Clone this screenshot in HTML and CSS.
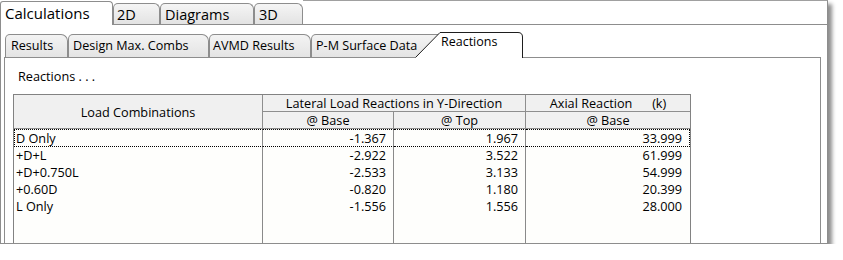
FILE: index.html
```html
<!DOCTYPE html>
<html lang="en">
<head>
	<meta charset="UTF-8">
	<title>Reactions</title>
	<link rel="stylesheet" href="styles.css">
</head>
<body>
	<div class="frame">
		<!-- main tabs -->
		<div class="main-tabs">
			<div class="mtab mtab-calc active">Calculations</div>
			<div class="mtab mtab-2d">2D</div>
			<div class="mtab mtab-diag">Diagrams</div>
			<div class="mtab mtab-3d">3D</div>
			<div class="mtab-fill"></div>
		</div>
		<div class="main-panel">
			<!-- sub tabs -->
			<div class="sub-tabs">
				<div class="stab stab-res">Results</div>
				<div class="stab stab-dmc">Design Max. Combs</div>
				<div class="stab stab-avmd">AVMD Results</div>
				<div class="stab stab-pm">P-M Surface Data</div>
				<div class="stab-active">
					<svg class="stab-shape" width="108" height="26" viewBox="0 0 108 26">
						<path d="M0,26 L25,0.5 H103 Q107.5,0.5 107.5,5 V26 Z" fill="#fff"/>
						<path d="M0.5,25.5 L25,0.5 H103 Q107.5,0.5 107.5,5 V26" fill="none" stroke="#1e1e1e"/>
					</svg>
					<span class="stab-label">Reactions</span>
				</div>
				<div class="stab-fill"></div>
			</div>
			<div class="sub-panel">
				<div class="caption">Reactions . . .</div>
				<div class="grid">
					<div class="hd hd-load">Load Combinations</div>
					<div class="hd hd-lat">Lateral Load Reactions in Y-Direction</div>
					<div class="hd hd-axial">Axial Reaction&nbsp;&nbsp;&nbsp;&nbsp;&nbsp;&nbsp;(k)</div>
					<div class="hd hd-sub">@ Base</div>
					<div class="hd hd-sub">@ Top</div>
					<div class="hd hd-sub hd-last">@ Base</div>

					<div class="cell name focus">D Only</div>
					<div class="cell num focus">-1.367</div>
					<div class="cell num focus">1.967</div>
					<div class="cell num last focus">33.999</div>

					<div class="cell name">+D+L</div>
					<div class="cell num">-2.922</div>
					<div class="cell num">3.522</div>
					<div class="cell num last">61.999</div>

					<div class="cell name">+D+0.750L</div>
					<div class="cell num">-2.533</div>
					<div class="cell num">3.133</div>
					<div class="cell num last">54.999</div>

					<div class="cell name">+0.60D</div>
					<div class="cell num">-0.820</div>
					<div class="cell num">1.180</div>
					<div class="cell num last">20.399</div>

					<div class="cell name">L Only</div>
					<div class="cell num">-1.556</div>
					<div class="cell num">1.556</div>
					<div class="cell num last">28.000</div>

					<div class="cell name filler"></div>
					<div class="cell num filler"></div>
					<div class="cell num filler"></div>
					<div class="cell num last filler"></div>
				</div>
			</div>
		</div>
	</div>
</body>
</html>
```

FILE: styles.css
```css
*{
	margin:0;
	padding:0;
	box-sizing:border-box;
}
body{
	background:#fff;
	font-family:"Open Sans","Noto Sans",sans-serif;
	color:#000;
}
.frame{
	width:828px;
	height:244px;
	display:flex;
	flex-direction:column;
	background:#fff;
	box-shadow:4px 4px 4px rgba(0,0,0,.45);
}
/*----------------main tabs----------------*/
.main-tabs{
	display:flex;
	align-items:flex-end;
	height:25px;
	flex:none;
	background:linear-gradient(#8d8d8d,#8d8d8d) left bottom/100% 1px no-repeat;
}
.mtab{
	height:21px;
	margin-bottom:1px;
	border:1px solid #8d8d8d;
	border-bottom:none;
	border-radius:5px 6px 0 0;
	background:linear-gradient(#f5f5f5,#e3e3e3);
	font-size:14.5px;
	line-height:21px;
	padding-left:3px;
	white-space:nowrap;
}
.mtab.active{
	height:24px;
	margin-bottom:0;
	background:#fff;
	border-radius:3px 4px 0 0;
	font-size:15px;
	line-height:22px;
	padding-left:4px;
}
.mtab-calc{ width:113px; }
.mtab-2d{ width:47px; }
.mtab-diag{ width:94px; padding-left:4px; }
.mtab-3d{ width:49px; padding-left:4px; }
.mtab-fill{
	flex:1;
	align-self:stretch;
	border-top:1px solid #a0a0a0;
	border-right:1px solid #8d8d8d;
}
/*----------------main panel----------------*/
.main-panel{
	flex:1;
	display:flex;
	flex-direction:column;
	border:1px solid #8d8d8d;
	border-top:none;
	padding:0 6px 0 3px;
	overflow:hidden;
}
.sub-tabs{
	display:flex;
	align-items:flex-end;
	height:33px;
	flex:none;
	padding-left:1px;
	background:linear-gradient(#8d8d8d,#8d8d8d) left bottom/100% 1px no-repeat;
}
.stab{
	height:23px;
	margin-bottom:1px;
	border:1px solid #8d8d8d;
	border-bottom:none;
	border-radius:5px 7px 0 0;
	background:linear-gradient(#f3f3f3,#e4e4e4);
	font-size:12.6px;
	line-height:22px;
	padding-left:4px;
	white-space:nowrap;
	overflow:hidden;
}
.stab-res{ width:63px; padding-left:5px; }
.stab-dmc{ width:141px; }
.stab-avmd{ width:102px; padding-left:3px; }
.stab-pm{ width:134px; }
.stab-active{
	position:relative;
	width:108px;
	height:26px;
	margin-left:-30px;
	padding-left:26px;
	font-size:12.5px;
	line-height:20px;
}
.stab-shape{
	position:absolute;
	left:0;
	top:0;
}
.stab-label{
	position:relative;
}
.stab-fill{
	flex:1;
}
.sub-panel{
	flex:1;
	border-left:1px solid #8d8d8d;
	border-right:1px solid #8d8d8d;
	padding-left:8px;
	overflow:hidden;
	background:#fff;
}
.caption{
	font-size:12.7px;
	line-height:17px;
	margin:10px 0 0 5px;
}
/*----------------grid----------------*/
.grid{
	display:grid;
	grid-template-columns:249px 131px 132px 164px;
	width:678px;
	margin-top:9px;
	border:1px solid #828282;
	border-bottom:none;
	font-size:12.7px;
	background:#fefefc;
}
.hd{
	background:#f0f0f0;
	border-right:1px solid #8e8e8e;
	border-bottom:1px solid #8e8e8e;
	text-align:center;
	height:17px;
	line-height:17px;
	white-space:nowrap;
}
.hd-load{
	grid-row:span 2;
	height:34px;
	line-height:34px;
}
.hd-lat{ grid-column:span 2; }
.hd-axial{ border-right:none; }
.hd-last{ border-right:none; }
.cell{
	height:17px;
	line-height:17px;
	border-right:1px solid #8a8a8a;
	white-space:nowrap;
}
.name{
	border-left:1px solid transparent;
	padding-left:1px;
}
.num{
	text-align:right;
	padding-right:7px;
}
.last{
	border-right:1px solid transparent;
}
.focus{
	height:18px;
	line-height:16px;
	border-top:1px dotted #000;
	border-bottom:1px dotted #000;
}
.name.focus{ border-left:1px dotted #000; }
.last.focus{ border-right:1px dotted #000; }
.filler{
	height:60px;
}
```
